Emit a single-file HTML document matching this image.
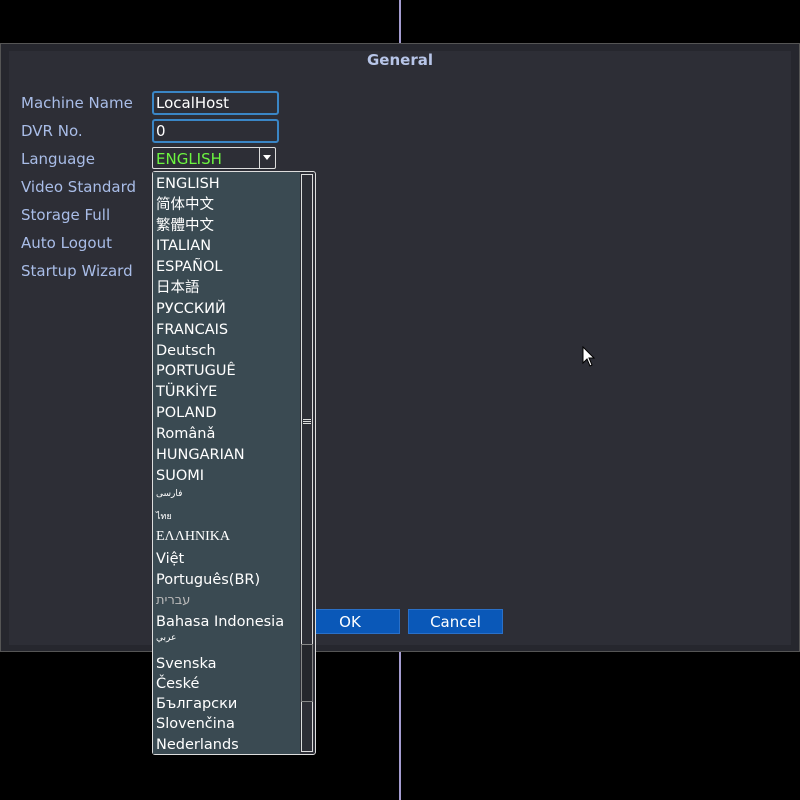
<!DOCTYPE html>
<html><head><meta charset="utf-8"><style>
body{margin:0;width:800px;height:800px;background:#000;position:relative;overflow:hidden;font-family:"DejaVu Sans","Noto Sans CJK SC",sans-serif;}
.vl{position:absolute;left:399px;width:2px;background:#a49cd0;}
.dlg{position:absolute;left:0;top:43px;width:798px;height:607px;border:1px solid #555;background:#26272e;}
.in{position:absolute;left:8px;top:7px;width:782px;height:594px;background:#2d2e36;}
.title{position:absolute;left:0;top:51px;width:800px;text-align:center;color:#b7c5e8;font-size:15px;font-weight:bold;}
.lab{position:absolute;left:21px;color:#a9bde8;font-size:15px;}
.fld{position:absolute;left:152px;width:121px;height:20px;border:2px solid #3a86c6;border-radius:3px;background:#2d2e36;color:#fff;font-size:15px;line-height:21px;padding-left:2px;box-sizing:content-box;}
.sel{position:absolute;left:152px;top:147px;width:124px;height:22px;border:1px solid #ddd;border-radius:2px;color:#6cf540;font-size:15px;line-height:22px;padding-left:3px;box-sizing:border-box;}
.arr{position:absolute;right:0;top:0;width:15px;height:20px;border-left:1px solid #ddd;}
.arr:after{content:"";position:absolute;left:3px;top:7px;border-left:4px solid transparent;border-right:4px solid transparent;border-top:5px solid #fff;}
.list{position:absolute;left:152px;top:171px;width:164px;height:584px;border:1px solid #ddd;border-radius:3px;box-sizing:border-box;background:#2d2e36;}
.lbg{position:absolute;left:0;top:0;width:147px;height:582px;background:#3a4a52;}
.sb{position:absolute;left:148px;top:2px;width:12px;height:578px;border:1px solid #ddd;box-sizing:border-box;}
.it{position:absolute;left:3px;color:#fff;font-size:14.5px;line-height:20px;white-space:nowrap;}
.btn{position:absolute;top:609px;height:23px;background:#0a58b8;border:1px solid #2a70c8;color:#fff;font-size:15px;text-align:center;line-height:24px;}
</style></head><body>
<div class="vl" style="top:0;height:43px"></div>
<div class="vl" style="top:651px;height:149px"></div>
<div class="dlg"><div class="in"></div></div>
<div class="title">General</div>
<div class="lab" style="top:94px">Machine Name</div>
<div class="lab" style="top:122px">DVR No.</div>
<div class="lab" style="top:150px">Language</div>
<div class="lab" style="top:178px">Video Standard</div>
<div class="lab" style="top:206px">Storage Full</div>
<div class="lab" style="top:234px">Auto Logout</div>
<div class="lab" style="top:262px">Startup Wizard</div>
<div class="fld" style="top:91px">LocalHost</div>
<div class="fld" style="top:119px">0</div>
<div class="sel">ENGLISH<div class="arr"></div></div>
<div class="btn" style="left:300px;width:98px">OK</div>
<div class="btn" style="left:408px;width:93px">Cancel</div>
<div class="list"><div class="lbg"></div><div class="sb"></div>
<div style="position:absolute;left:150px;top:247px;width:8px;height:1px;border-top:1px solid #ddd;border-bottom:1px solid #ddd;"></div>
<div style="position:absolute;left:150px;top:251px;width:8px;height:1px;background:#ddd"></div>
<div style="position:absolute;left:148px;top:472px;width:12px;height:58px;border:1px solid #888;box-sizing:border-box;background:#25262c"></div>
<div class="it" style="top:2px">ENGLISH</div>
<div class="it" style="top:23px">简体中文</div>
<div class="it" style="top:44px">繁體中文</div>
<div class="it" style="top:64px">ITALIAN</div>
<div class="it" style="top:85px">ESPAÑOL</div>
<div class="it" style="top:106px">日本語</div>
<div class="it" style="top:127px">РУССКИЙ</div>
<div class="it" style="top:148px">FRANCAIS</div>
<div class="it" style="top:169px">Deutsch</div>
<div class="it" style="top:189px">PORTUGUÊ</div>
<div class="it" style="top:210px">TÜRKİYE</div>
<div class="it" style="top:231px">POLAND</div>
<div class="it" style="top:252px">Românǎ</div>
<div class="it" style="top:273px">HUNGARIAN</div>
<div class="it" style="top:294px">SUOMI</div>
<div class="it" style="top:312px;font-size:9px">فارسی</div>
<div class="it" style="top:335px;font-size:9px">ไทย</div>
<div class="it" style="top:355px;font-family:'Liberation Serif',serif;font-size:14px">ΕΛΛΗΝΙΚΑ</div>
<div class="it" style="top:377px">Việt</div>
<div class="it" style="top:398px">Português(BR)</div>
<div class="it" style="top:419px;color:#bbb;font-size:13px">עברית</div>
<div class="it" style="top:440px">Bahasa Indonesia</div>
<div class="it" style="top:456px;font-size:9px">عربي</div>
<div class="it" style="top:482px">Svenska</div>
<div class="it" style="top:502px">České</div>
<div class="it" style="top:522px">Български</div>
<div class="it" style="top:542px">Slovenčina</div>
<div class="it" style="top:563px">Nederlands</div>
</div>
<svg style="position:absolute;left:582px;top:346px" width="14" height="22"><path d="M1 1 L1 17 L5 13 L8 20 L10 19 L7 12 L12 12 Z" fill="#fff" stroke="#000" stroke-width="1"/></svg>
</body></html>
